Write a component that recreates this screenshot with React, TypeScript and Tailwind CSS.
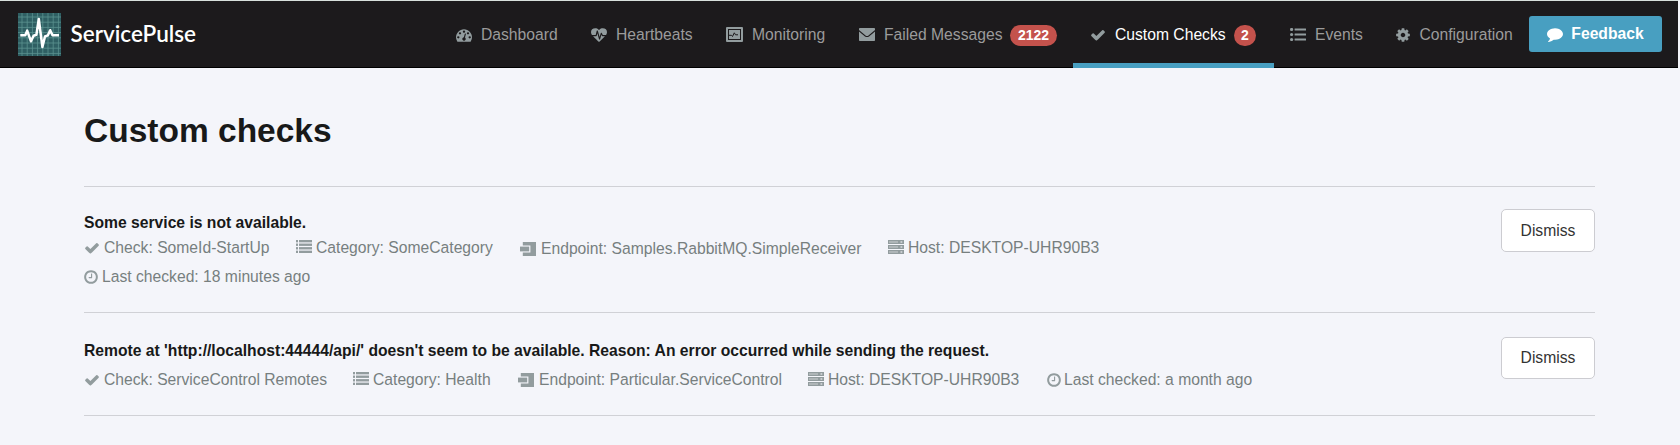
import React from "react";

type IconProps = { d: string; className?: string };

function Glyph({ d, className = "" }: IconProps) {
  return (
    <svg viewBox="0 0 1792 1792" fill="currentColor" className={`shrink-0 ${className}`}>
      <path d={d} />
    </svg>
  );
}

const CHECK =
  "M1671 566q0 40-28 68l-724 724-136 136q-28 28-68 28t-68-28l-136-136-362-362q-28-28-28-68t28-68l136-136q28-28 68-28t68 28l294 295 656-657q28-28 68-28t68 28l136 136q28 28 28 68z";
const COG =
  "M1152 896q0-106-75-181t-181-75-181 75-75 181 75 181 181 75 181-75 75-181zm512-109v222q0 12-8 23t-20 13l-185 28q-19 54-39 91 35 50 107 138 10 12 10 25t-9 23q-27 37-99 108t-94 71q-12 0-26-9l-138-108q-44 23-91 38-16 136-29 186-7 28-36 28h-222q-14 0-24.5-8.5t-11.5-21.5l-28-184q-49-16-90-37l-141 107q-10 9-25 9-14 0-25-11-126-114-165-168-7-10-7-23 0-12 8-23 15-21 51-66.5t54-70.5q-27-50-41-99l-183-27q-13-2-21-12.5t-8-23.5v-222q0-12 8-23t19-13l186-28q14-46 39-92-40-57-107-138-10-12-10-24 0-10 9-23 26-36 98.5-107.5t94.5-71.5q13 0 26 10l138 107q44-23 91-38 16-136 29-186 7-28 36-28h222q14 0 24.5 8.5t11.5 21.5l28 184q49 16 90 37l142-107q9-9 24-9 13 0 25 10 129 119 165 170 7 8 7 22 0 12-8 23-15 21-51 66.5t-54 70.5q26 50 41 98l183 28q13 2 21 12.5t8 23.5z";
const COMMENT =
  "M1792 896q0 174-120 321.5t-326 233-450 85.5q-70 0-145-8-198 175-460 242-49 14-114 22-17 2-30.5-9t-17.5-29v-1q-3-4-.5-12t2-10 4.5-9.5l6-9 7-8.5 8-9q7-8 31-34.5t34.5-38 31-39.5 32.5-51 27-59 26-76q-157-89-247.5-220t-90.5-281q0-130 71-248.5t191-204.5 286-136.5 348-50.5q244 0 450 85.5t326 233 120 321.5z";
const CLOCK =
  "M1024 544v448q0 14-9 23t-23 9h-320q-14 0-23-9t-9-23v-64q0-14 9-23t23-9h224v-352q0-14 9-23t23-9h64q14 0 23 9t9 23zm416 352q0-148-73-273t-198-198-273-73-273 73-198 198-73 273 73 273 198 198 273 73 273-73 198-198 73-273zm224 0q0 209-103 385.5t-279.5 279.5-385.5 103-385.5-103-279.5-279.5-103-385.5 103-385.5 279.5-279.5 385.5-103 385.5 103 279.5 279.5 103 385.5z";
const GAUGE =
  "M384 1152q0-53-37.5-90.5t-90.5-37.5-90.5 37.5-37.5 90.5 37.5 90.5 90.5 37.5 90.5-37.5 37.5-90.5zm192-448q0-53-37.5-90.5t-90.5-37.5-90.5 37.5-37.5 90.5 37.5 90.5 90.5 37.5 90.5-37.5 37.5-90.5zm428 481l101-382q6-26-7.5-48.5t-38.5-29.5-48 6.5-30 39.5l-101 382q-60 5-107 43.5t-63 98.5q-20 77 20 146t117 89 146-20 89-117q16-60-6-117t-72-91zm660-33q0-53-37.5-90.5t-90.5-37.5-90.5 37.5-37.5 90.5 37.5 90.5 90.5 37.5 90.5-37.5 37.5-90.5zm-640-640q0-53-37.5-90.5t-90.5-37.5-90.5 37.5-37.5 90.5 37.5 90.5 90.5 37.5 90.5-37.5 37.5-90.5zm448 192q0-53-37.5-90.5t-90.5-37.5-90.5 37.5-37.5 90.5 37.5 90.5 90.5 37.5 90.5-37.5 37.5-90.5zm320 448q0 261-141 483-19 29-54 29h-1402q-35 0-54-29-141-221-141-483 0-182 71-348t191-286 286-191 348-71 348 71 286 191 191 286 71 348z";
const HEART =
  "M1280 1024h305q-5 6-10 10.5t-9 7.5l-3 4-623 600q-18 18-44 18t-44-18l-624-602q-5-2-21-20h369q22 0 39.5-13.5t22.5-34.5l70-281 190 667q6 20 23 33t39 13q21 0 38-13t23-33l146-485 56 112q18 35 57 35zm512-428q0 145-103 300h-369l-111-221q-8-17-25.5-27t-36.5-8q-45 5-56 46l-129 430-196-686q-6-20-23.5-33t-39.5-13-39 13.5-22 34.5l-116 464h-423q-103-155-103-300 0-220 127-344t351-124q62 0 126.5 21.5t120 58 95.5 68.5 76 68q36-36 76-68t95.5-68.5 120-58 126.5-21.5q224 0 351 124t127 344z";

function Logo() {
  const lines = [4, 9.2, 14.4, 19.6, 24.8, 30, 35.2, 40.4];
  return (
    <svg viewBox="0 0 43 43" className="size-[43px] shrink-0">
      <rect width="43" height="43" fill="#2f5f63" />
      <g stroke="#5c9391" strokeWidth="0.8">
        {lines.map((p) => (
          <path key={p} d={`M${p} 0V43M0 ${p}H43`} />
        ))}
      </g>
      <path
        d="M2.3 22.3H7.3L9.2 17.6L13 28.3L15.6 22.8L18.4 21.8L20.8 6L24.4 34L27 23.5L29.8 22.4L32.2 17.2L34.5 22.3H41"
        fill="none"
        stroke="#fff"
        strokeWidth="2.5"
        strokeLinejoin="round"
      />
    </svg>
  );
}

function MonitorIcon() {
  return (
    <svg viewBox="0 0 17 15" className="h-[15px] w-[17px] shrink-0">
      <rect width="17" height="15" rx="1" fill="currentColor" />
      <rect x="2.5" y="2.5" width="12" height="10" fill="none" stroke="#1c1a1c" strokeWidth="1" />
      <path d="M3 8.3H5.5L6.5 9.5L8.3 5.8L9.5 7.8H12" fill="none" stroke="#1c1a1c" strokeWidth="1" />
    </svg>
  );
}

function MailIcon() {
  return (
    <svg viewBox="0 0 16 13" fill="currentColor" className="h-[13px] w-4 shrink-0">
      <path d="M0 .8Q0 0 .8 0H15.2Q16 0 16 .8V2L9.5 7.4Q8 8.6 6.5 7.4L0 2Z" />
      <path d="M0 3.4L6 8.4Q8 9.8 10 8.4L16 3.4V12.2Q16 13 15.2 13H.8Q0 13 0 12.2Z" />
    </svg>
  );
}

function NavListIcon() {
  return (
    <svg viewBox="0 0 16 13" fill="currentColor" className="h-[13px] w-4 shrink-0">
      {[1.5, 6.5, 11.5].map((y) => (
        <g key={y}>
          <circle cx="1.6" cy={y} r="1.6" />
          <rect x="4.6" y={y - 1.1} width="11.4" height="2.2" rx="0.3" />
        </g>
      ))}
    </svg>
  );
}

function ListIcon() {
  return (
    <svg viewBox="0 0 16 13" fill="currentColor" className="-mt-[2px] h-[13px] w-4 shrink-0">
      {[0, 3.55, 7.1, 10.65].map((y) => (
        <g key={y}>
          <rect y={y} width="2" height="2.35" />
          <rect x="3" y={y} width="13" height="2.35" />
        </g>
      ))}
    </svg>
  );
}

function EndpointIcon() {
  return (
    <svg viewBox="0 0 16 14" fill="currentColor" className="mr-px h-[14px] w-4 shrink-0">
      <path d="M2.8 0H16V14H2.8V10.6H10.4V3.4H2.8Z" />
      <rect y="4.6" width="9.2" height="4.8" />
    </svg>
  );
}

function HostIcon() {
  return (
    <svg viewBox="0 0 16 14" className="-mt-px h-[14px] w-4 shrink-0">
      {[0, 5, 10].map((y) => (
        <g key={y}>
          <rect y={y} width="16" height="4" fill="currentColor" />
          <rect x="1" y={y + 1.5} width="9" height="1" fill="#c9cdd0" />
          <rect x="12.5" y={y + 1.3} width="1.8" height="1.4" fill="#dfe2e4" />
        </g>
      ))}
    </svg>
  );
}

type NavProps = { icon: React.ReactNode; label: string; badge?: string; active?: boolean; className: string };

function NavItem({ icon, label, badge, active, className }: NavProps) {
  return (
    <a
      className={`flex h-[67px] items-center border-b-[5px] pt-[5px] leading-5 whitespace-nowrap ${
        active ? "border-[#489fc1] text-white" : "border-transparent text-[#9b9b9b]"
      } ${className}`}
    >
      <span className="flex text-[#929c9e]">{icon}</span>
      <span className="ml-[9px]">{label}</span>
      {badge && (
        <span className="mt-px ml-2 flex h-[21px] items-center rounded-full bg-[#c4524c] px-[7.5px] text-[14px] font-bold text-white">
          {badge}
        </span>
      )}
    </a>
  );
}

type Detail = { icon: React.ReactNode; text: string; className: string };

type CheckProps = { title: string; details: Detail[]; className: string; rowClass: string; buttonClass: string };

function Check({ title, details, className, rowClass, buttonClass }: CheckProps) {
  return (
    <section className={`flex justify-between border-b border-[#d0d1d6] ${className}`}>
      <div className="w-[1300px]">
        <h2 className="text-[15.68px] leading-[22px] font-bold text-[#181919]">{title}</h2>
        <div className={`flex flex-wrap text-[#777f7f] ${rowClass}`}>
          {details.map((d) => (
            <span key={d.text} className={`flex h-[29px] items-center whitespace-nowrap ${d.className}`}>
              <span className="flex text-[#929c9e]">{d.icon}</span>
              {d.text}
            </span>
          ))}
        </div>
      </div>
      <button
        className={`-mt-[3px] w-[94px] rounded-[5px] border border-[#ccccd1] bg-white text-[#333] ${buttonClass}`}
      >
        Dismiss
      </button>
    </section>
  );
}

export default function App() {
  return (
    <div className="h-[445px] overflow-hidden bg-[#f4f5fa] font-['Liberation_Sans',Arial,sans-serif] text-[15.68px]">
      <header className="mr-[2px] flex h-[68px] border-t border-b border-t-[#d8e0dc] border-b-black bg-[#1c1a1c]">
        <div className="flex h-[66px] w-[456px] items-center pl-[17.5px] font-['Lato',sans-serif] text-[22.5px] font-semibold text-white">
          <Logo />
          <span className="ml-[10px]">ServicePulse</span>
        </div>
        <NavItem className="w-[135px]" icon={<Glyph d={GAUGE} className="size-4" />} label="Dashboard" />
        <NavItem className="w-[135px]" icon={<Glyph d={HEART} className="size-4" />} label="Heartbeats" />
        <NavItem className="w-[133px]" icon={<MonitorIcon />} label="Monitoring" />
        <NavItem className="w-[214px]" icon={<MailIcon />} label="Failed Messages" badge="2122" />
        <NavItem className="w-[201px] pl-[17px]" icon={<Glyph d={CHECK} className="size-4" />} label="Custom Checks" badge="2" active />
        <NavItem className="w-[105px] pl-4" icon={<NavListIcon />} label="Events" />
        <NavItem className="w-[134px] pl-[15.5px]" icon={<Glyph d={COG} className="size-4" />} label="Configuration" />
        <button className="mt-[15px] ml-4 flex h-9 w-[133px] items-center justify-center rounded-[3px] bg-[#489fc1] font-bold text-white">
          <Glyph d={COMMENT} className="size-4" />
          <span className="ml-2">Feedback</span>
        </button>
      </header>
      <main className="ml-[84px] w-[1511px]">
        <h1 className="h-[119px] border-b border-[#d0d1d6] pt-[39px] text-[33.5px] leading-[48px] font-bold text-[#181919]">
          Custom checks
        </h1>
        <Check
          className="h-[126px] pt-[25px]"
          rowClass="-mt-px"
          buttonClass="h-[43px]"
          title="Some service is not available."
          details={[
            { icon: <Glyph d={CHECK} className="mr-1 size-4" />, text: "Check: SomeId-StartUp", className: "w-[212px]" },
            { icon: <span className="mr-1"><ListIcon /></span>, text: "Category: SomeCategory", className: "w-[224px]" },
            { icon: <span className="mr-1"><EndpointIcon /></span>, text: "Endpoint: Samples.RabbitMQ.SimpleReceiver", className: "w-[368px] pt-[2px]" },
            { icon: <span className="mr-1"><HostIcon /></span>, text: "Host: DESKTOP-UHR90B3", className: "w-[300px]" },
            { icon: <Glyph d={CLOCK} className="-ml-px mr-[3px] size-4" />, text: "Last checked: 18 minutes ago", className: "" },
          ]}
        />
        <Check
          className="h-[103px] pt-[27px]"
          rowClass="mt-[3px]"
          buttonClass="h-[42px]"
          title="Remote at 'http://localhost:44444/api/' doesn't seem to be available. Reason: An error occurred while sending the request."
          details={[
            { icon: <Glyph d={CHECK} className="mr-1 size-4" />, text: "Check: ServiceControl Remotes", className: "w-[269px]" },
            { icon: <span className="mr-1"><ListIcon /></span>, text: "Category: Health", className: "w-[165px]" },
            { icon: <span className="mr-1"><EndpointIcon /></span>, text: "Endpoint: Particular.ServiceControl", className: "w-[290px]" },
            { icon: <span className="mr-1"><HostIcon /></span>, text: "Host: DESKTOP-UHR90B3", className: "w-[238px]" },
            { icon: <Glyph d={CLOCK} className="mr-[2px] size-4" />, text: "Last checked: a month ago", className: "" },
          ]}
        />
      </main>
    </div>
  );
}
